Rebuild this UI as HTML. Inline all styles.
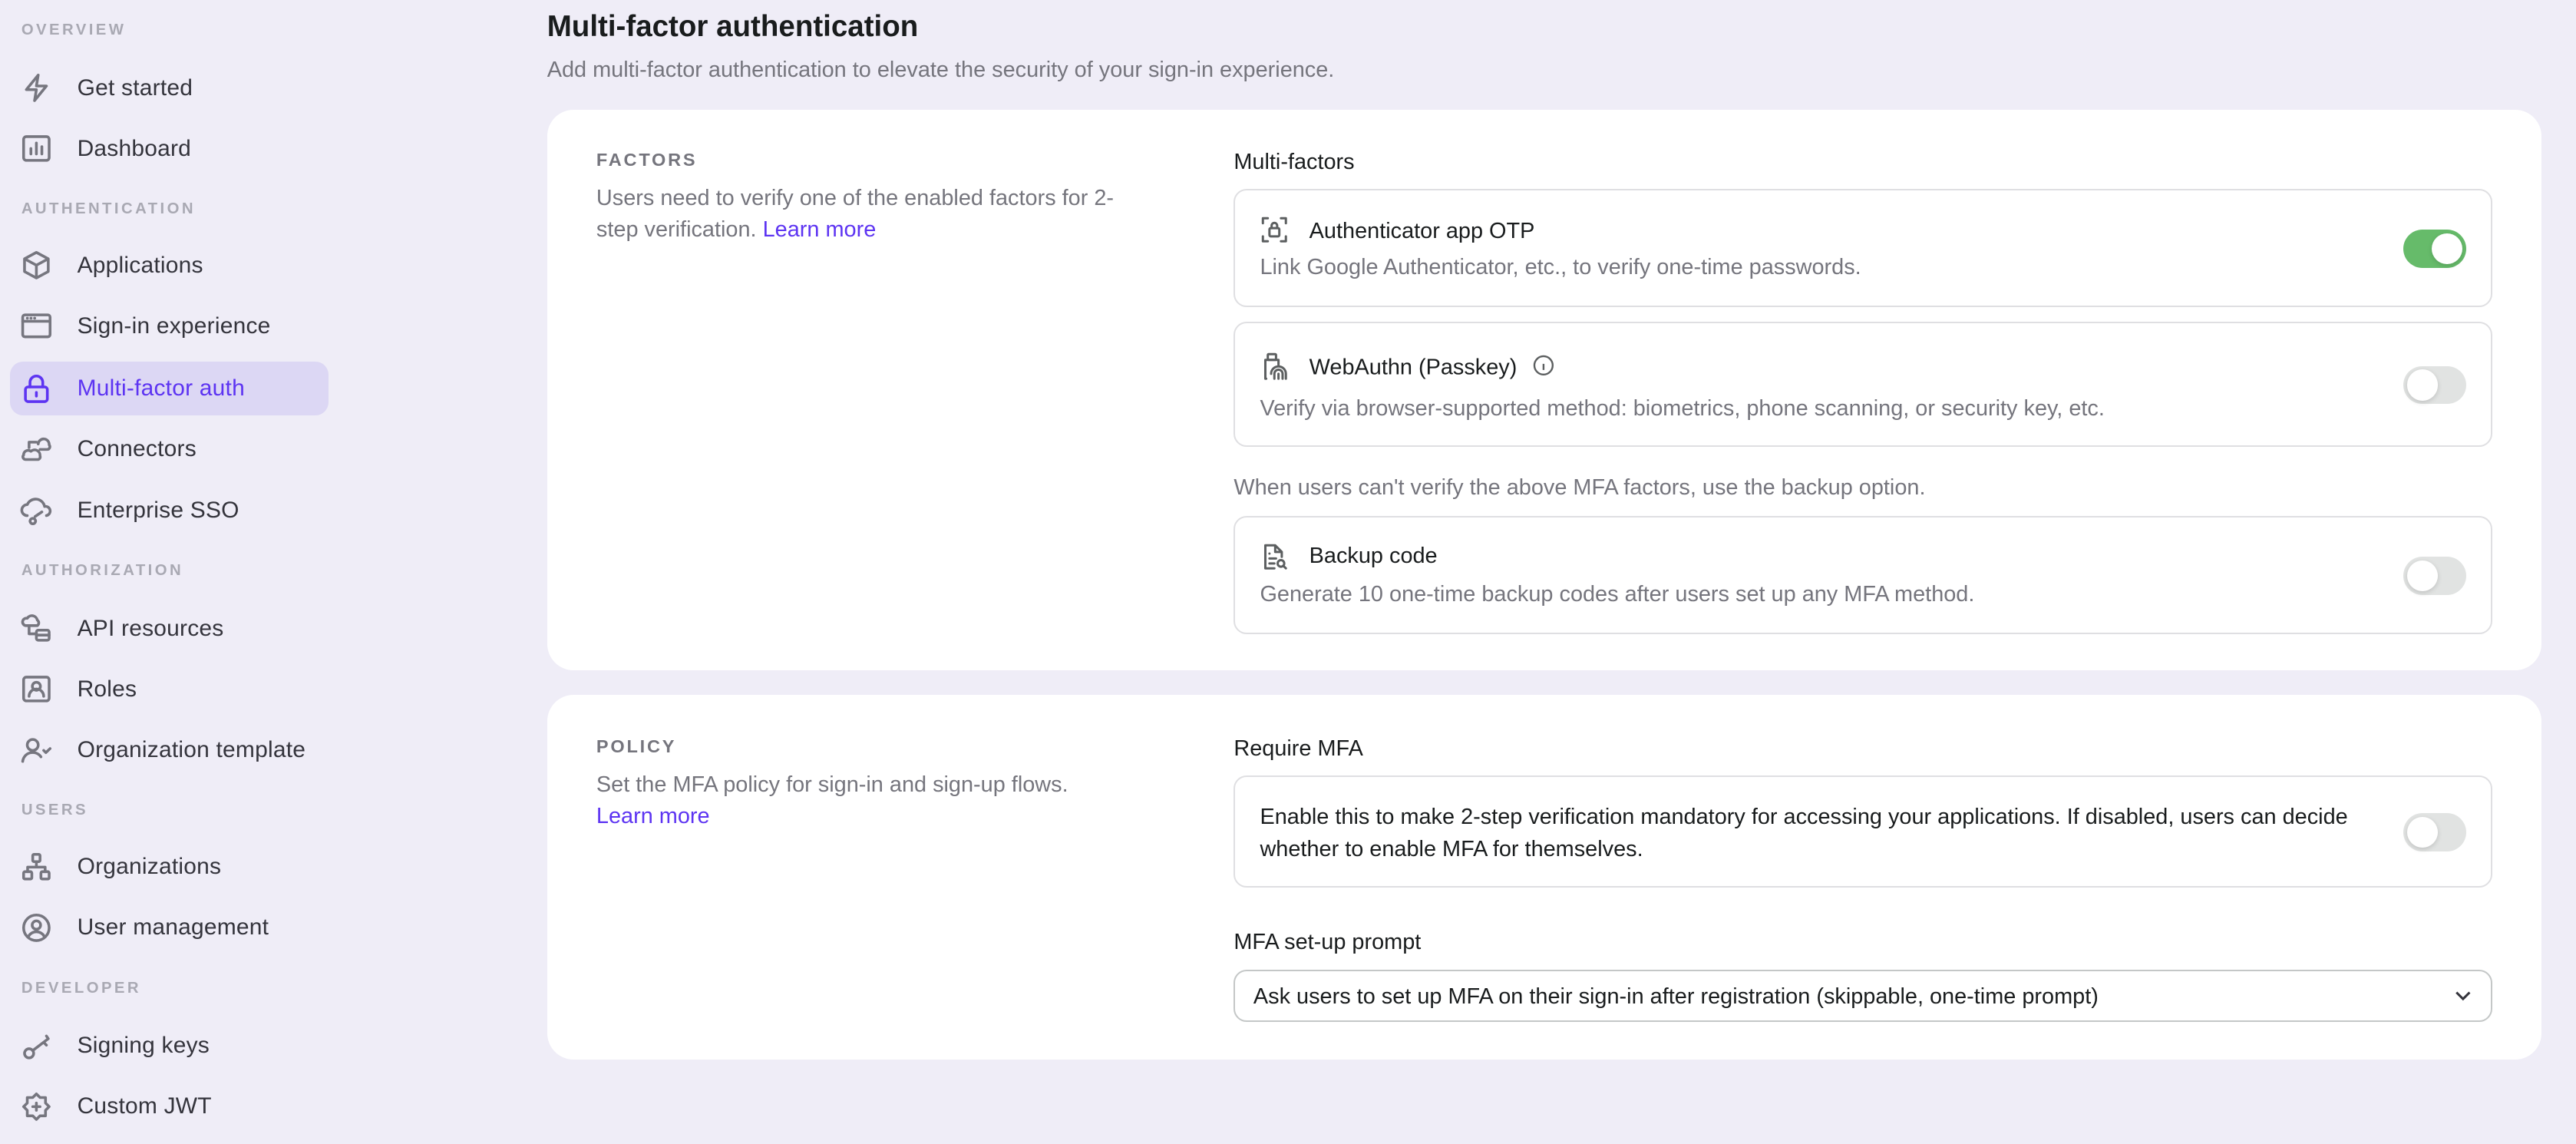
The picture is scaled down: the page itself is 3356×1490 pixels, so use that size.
<!DOCTYPE html>
<html><head><meta charset="utf-8"><style>
*{box-sizing:border-box;margin:0;padding:0}
html,body{width:3356px;height:1490px;overflow:hidden;background:#efedf7}
#root{zoom:2.1403;width:1568px;height:696px;position:relative;font-family:"Liberation Sans",sans-serif;color:#191c1d}
.abs{position:absolute}
.sec{position:absolute;left:13px;font-size:9.5px;letter-spacing:1.6px;color:#a9a9b3;font-weight:600}
.item{position:absolute;left:6px;width:194px;height:33px;border-radius:8px;display:flex;align-items:center}
.item svg{position:absolute;left:6px;width:20px;height:20px;fill:none;stroke:#76767f;stroke-width:1.5;stroke-linecap:round;stroke-linejoin:round}
.item span{position:absolute;left:41px;font-size:14px;color:#34343c;letter-spacing:0.1px}
.item.act{background:#dcd7f4}
.item.act span{color:#5d34f2}
.item.act svg{stroke:#5d34f2}
.card{position:absolute;left:333px;width:1214px;background:#fff;border-radius:16px}
.lbl{position:absolute;left:30px;font-size:11px;letter-spacing:1.3px;color:#75757d;font-weight:600}
.desc{position:absolute;left:30px;width:340px;font-size:13.5px;line-height:19.5px;color:#75757d}
a{color:#5d34f2;text-decoration:none}
.h{position:absolute;left:418px;font-size:13.5px;color:#191c1d}
.box{position:absolute;left:418px;width:766px;border:1px solid #dfdfe2;border-radius:8px}
.box .t{position:absolute;left:45px;font-size:13.5px;color:#191c1d}
.box .d{position:absolute;left:15px;font-size:13.5px;color:#75757d}
.box svg.ic{position:absolute;left:15px;width:18px;height:18px;fill:none;stroke:#5c5f60;stroke-width:1.4;stroke-linecap:round;stroke-linejoin:round}
.tg{position:absolute;right:15px;width:38px;height:23px;border-radius:12px;background:#e1e3e2}
.tg::after{content:"";position:absolute;top:2px;left:2px;width:19px;height:19px;border-radius:50%;background:#fff;box-shadow:0 1px 3px rgba(0,0,0,.15)}
.tg.on{background:#66bb6a}
.tg.on::after{left:17px}
</style></head><body><div id="root">

<div class="sec" style="top:13px">OVERVIEW</div>
<div class="item" style="top:37px"><svg viewBox="0 0 18 18"><path d="M10 2L3.5 10H9L8 16L14.5 8H9Z"/></svg><span>Get started</span></div>
<div class="item" style="top:74px"><svg viewBox="0 0 18 18"><rect x="2" y="2.5" width="14" height="13" rx="1.5"/><path d="M6 12V9M9 12V6M12 12V8"/></svg><span>Dashboard</span></div>
<div class="sec" style="top:122px">AUTHENTICATION</div>
<div class="item" style="top:145px"><svg viewBox="0 0 18 18"><path d="M9 2L15.5 5.5V12.5L9 16L2.5 12.5V5.5Z M2.5 5.5L9 9L15.5 5.5 M9 9V16"/></svg><span>Applications</span></div>
<div class="item" style="top:182px"><svg viewBox="0 0 18 18"><rect x="1.5" y="3" width="15" height="12" rx="1.2"/><path d="M1.5 6.5H16.5M4 4.8h.1M6 4.8h.1M8 4.8h.1"/></svg><span>Sign-in experience</span></div>
<div class="item act" style="top:220px"><svg viewBox="0 0 18 18"><rect x="3" y="8" width="12" height="8" rx="1.5"/><path d="M5.5 8V5.5a3.5 3.5 0 0 1 7 0V8M9 11v2"/></svg><span>Multi-factor auth</span></div>
<div class="item" style="top:257px"><svg viewBox="0 0 18 18"><path d="M10 6a3 3 0 0 1 6 0.5a1.5 1.5 0 0 1-1 2.5H11 M2 12a2.5 2.5 0 0 1 4-2a3 3 0 0 1 5 2.5a1.5 1.5 0 0 1-1 2H3a1.5 1.5 0 0 1-1-2.5 M5 8V5h4"/></svg><span>Connectors</span></div>
<div class="item" style="top:294px"><svg viewBox="0 0 18 18"><path d="M4 12a3 3 0 0 1 0-6a5 5 0 0 1 9.5 1a2.5 2.5 0 0 1 1 5M7 13.5a1.5 1.5 0 1 0 0.1 0M8.3 12.5L12 10"/></svg><span>Enterprise SSO</span></div>
<div class="sec" style="top:342px">AUTHORIZATION</div>
<div class="item" style="top:366px"><svg viewBox="0 0 18 18"><path d="M3 7.5a2 2 0 0 1 1-4a3 3 0 0 1 5.5 1a1.8 1.8 0 0 1 0 3H3Z M5 7.5V12H9"/><rect x="9" y="10" width="7" height="5.5" rx="1"/><path d="M9 12.7h7"/></svg><span>API resources</span></div>
<div class="item" style="top:403px"><svg viewBox="0 0 18 18"><rect x="2" y="2.5" width="14" height="13" rx="1.5"/><circle cx="9" cy="7.5" r="2.2"/><path d="M5 13a4 4 0 0 1 8 0"/></svg><span>Roles</span></div>
<div class="item" style="top:440px"><svg viewBox="0 0 18 18"><circle cx="7" cy="6" r="3"/><path d="M1.5 15a5.5 5.5 0 0 1 10-2.5M13 9l1.2 1.2L16.5 8"/></svg><span>Organization template</span></div>
<div class="sec" style="top:488px">USERS</div>
<div class="item" style="top:511px"><svg viewBox="0 0 18 18"><rect x="7" y="2" width="4" height="4" rx=".7"/><rect x="2" y="11.5" width="4.5" height="4" rx=".7"/><rect x="11.5" y="11.5" width="4.5" height="4" rx=".7"/><path d="M9 6v3M4.2 11.5V9h9.6v2.5"/></svg><span>Organizations</span></div>
<div class="item" style="top:548px"><svg viewBox="0 0 18 18"><circle cx="9" cy="9" r="7"/><circle cx="9" cy="7.5" r="2.3"/><path d="M4.5 14a5 5 0 0 1 9 0"/></svg><span>User management</span></div>
<div class="sec" style="top:596px">DEVELOPER</div>
<div class="item" style="top:620px"><svg viewBox="0 0 18 18"><circle cx="5" cy="13" r="2.5"/><path d="M7 11.5L15.5 5M13 7l1.5 1.5M15.5 5L14.5 3.5"/></svg><span>Signing keys</span></div>
<div class="item" style="top:657px"><svg viewBox="0 0 18 18"><path d="M9 2L11 4H14V7L16 9L14 11V14H11L9 16L7 14H4V11L2 9L4 7V4H7Z M9 7v4M7 9h4"/></svg><span>Custom JWT</span></div>

<div class="abs" style="left:333px;top:6px;font-size:18px;font-weight:600;color:#191c1d">Multi-factor authentication</div>
<div class="abs" style="left:333px;top:35px;font-size:13.5px;color:#75757d">Add multi-factor authentication to elevate the security of your sign-in experience.</div>

<div class="card" style="top:67px;height:341px">
 <div class="lbl" style="top:24px">FACTORS</div>
 <div class="desc" style="top:44px">Users need to verify one of the enabled factors for 2-step verification. <a>Learn more</a></div>
 <div class="h" style="top:24px">Multi-factors</div>
 <div class="box" style="top:48px;height:72px">
  <svg class="ic" viewBox="0 0 18 18" style="top:15px"><path d="M2 5V2h3M13 2h3v3M16 13v3h-3M5 16H2v-3"/><rect x="6" y="8" width="6" height="5" rx=".8"/><path d="M7.3 8V6.5a1.7 1.7 0 0 1 3.4 0V8"/></svg>
  <div class="t" style="top:17px">Authenticator app OTP</div>
  <div class="d" style="top:39px">Link Google Authenticator, etc., to verify one-time passwords.</div>
  <div class="tg on" style="top:24px"></div>
 </div>
 <div class="box" style="top:129px;height:76px">
  <svg class="ic" viewBox="0 0 18 18" style="top:17px"><rect x="5" y="1.5" width="5" height="3.5" rx=".5"/><path d="M4 16.5H3.5V5h8v3M9 16.5v-3a2.5 2.5 0 0 1 5 0v3M11.5 16.5v-3M16 16.5v-3a4.5 4.5 0 0 0-9 0"/></svg>
  <div class="t" style="top:19px">WebAuthn (Passkey) <svg viewBox="0 0 14 14" width="13" height="13" style="vertical-align:-1px;margin-left:6px;fill:none;stroke:#5c5f60;stroke-width:1.2"><circle cx="7" cy="7" r="6"/><path d="M7 6v4M7 4h.01"/></svg></div>
  <div class="d" style="top:44px">Verify via browser-supported method: biometrics, phone scanning, or security key, etc.</div>
  <div class="tg" style="top:26px"></div>
 </div>
 <div class="h" style="top:222px;color:#75757d">When users can't verify the above MFA factors, use the backup option.</div>
 <div class="box" style="top:247px;height:72px">
  <svg class="ic" viewBox="0 0 18 18" style="top:15px"><path d="M9 16H3.5V2h6l4 4v3M9.5 2v4h4M6 7h.01M6 10h4M6 13h3"/><circle cx="13" cy="13" r="2"/><path d="M14.5 14.5L16 16"/></svg>
  <div class="t" style="top:16px">Backup code</div>
  <div class="d" style="top:39px">Generate 10 one-time backup codes after users set up any MFA method.</div>
  <div class="tg" style="top:24px"></div>
 </div>
</div>

<div class="card" style="top:423px;height:222px">
 <div class="lbl" style="top:25px">POLICY</div>
 <div class="desc" style="top:45px">Set the MFA policy for sign-in and sign-up flows.<br><a>Learn more</a></div>
 <div class="h" style="top:25px">Require MFA</div>
 <div class="box" style="top:49px;height:68px">
  <div class="d" style="top:15px;line-height:19.5px;width:690px;color:#191c1d">Enable this to make 2-step verification mandatory for accessing your applications. If disabled, users can decide whether to enable MFA for themselves.</div>
  <div class="tg" style="top:22px"></div>
 </div>
 <div class="h" style="top:143px">MFA set-up prompt</div>
 <div class="box" style="top:167px;height:32px;border-color:#c4c7c7">
  <div class="d" style="top:8px;left:11px;color:#191c1d">Ask users to set up MFA on their sign-in after registration (skippable, one-time prompt)</div>
  <svg viewBox="0 0 12 12" width="12" height="12" style="position:absolute;right:11px;top:9px;fill:none;stroke:#34343c;stroke-width:1.4"><path d="M2 4l4 4 4-4"/></svg>
 </div>
</div>

</div></body></html>
